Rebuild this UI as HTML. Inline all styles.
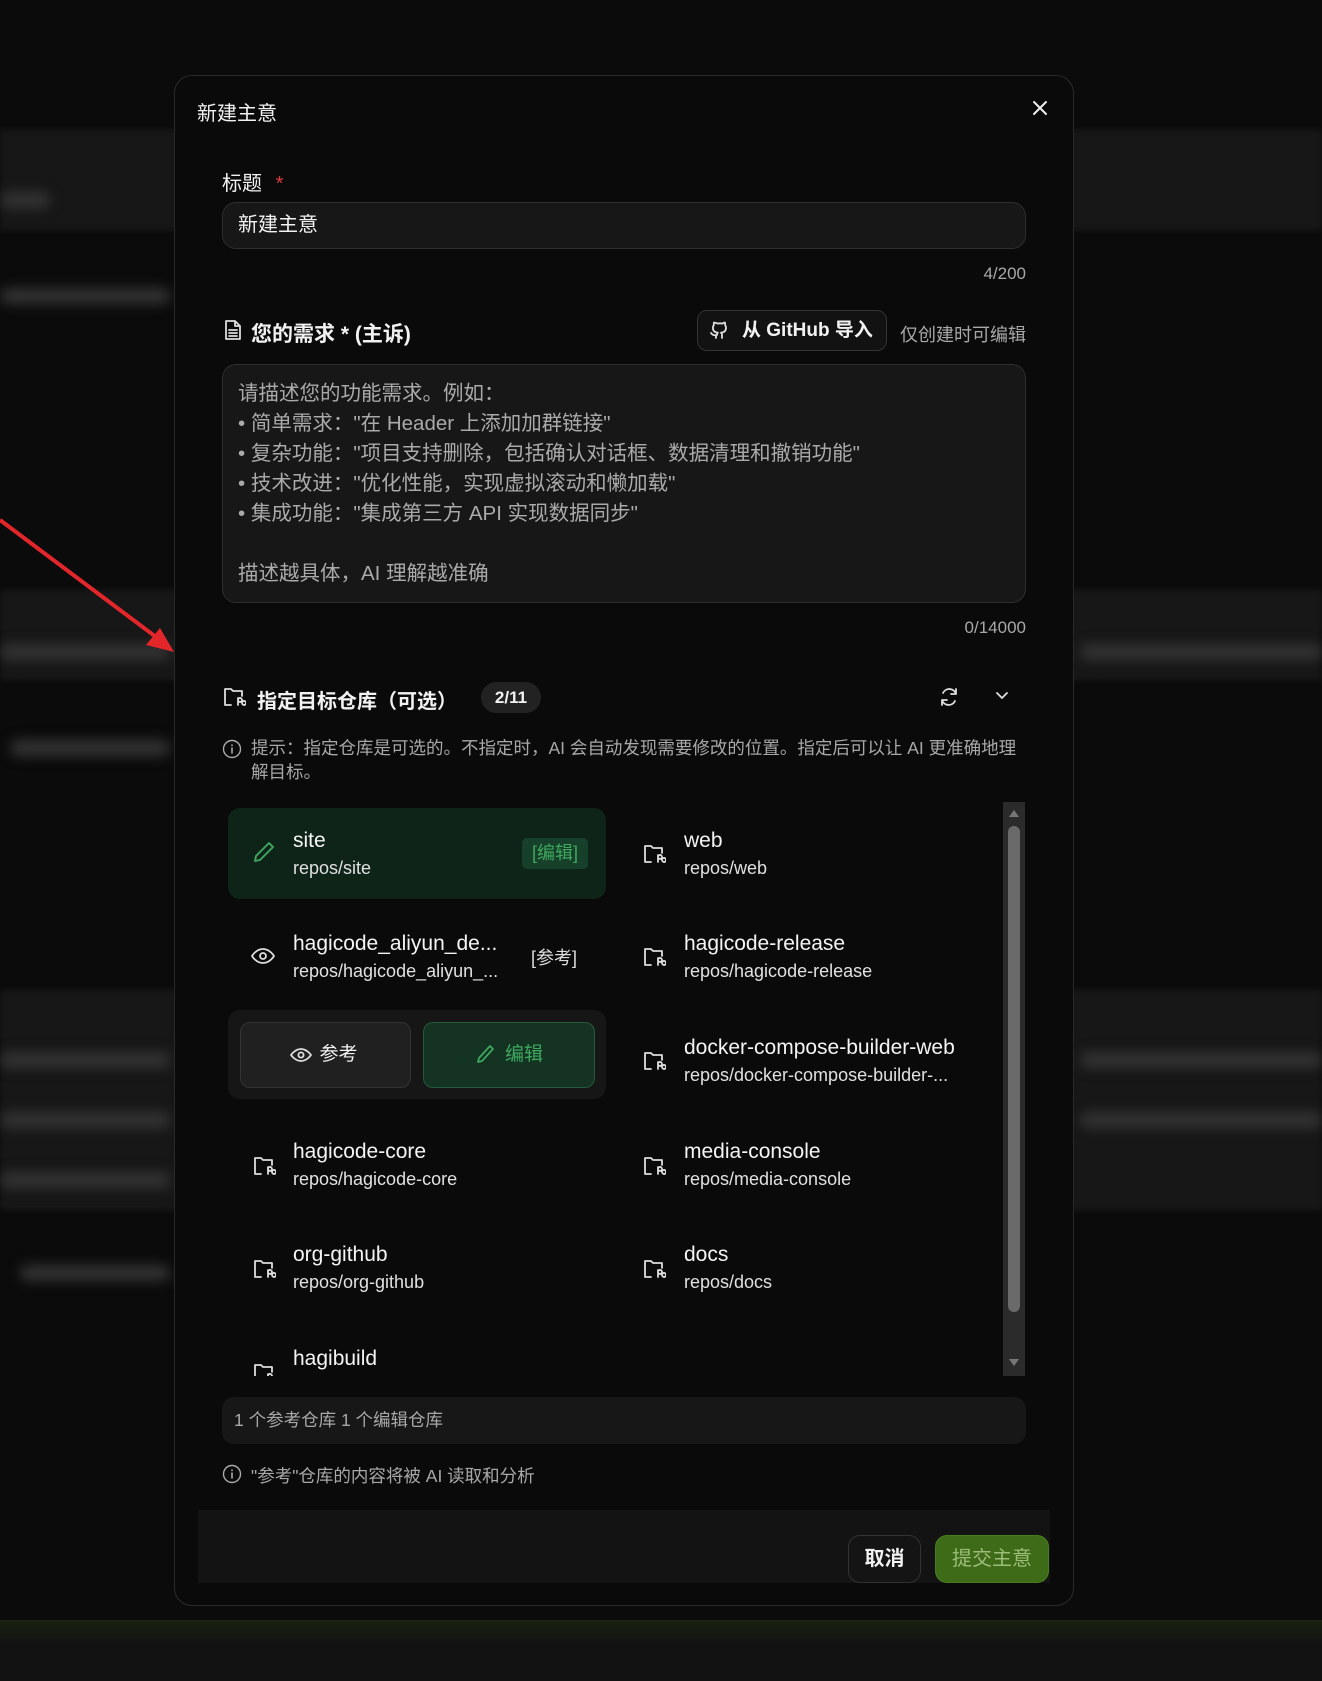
<!DOCTYPE html>
<html><head><meta charset="utf-8"><style>
*{box-sizing:border-box;margin:0;padding:0}
body{width:1322px;height:1681px;background:#0b0b0b;position:relative;overflow:hidden;font-family:"Liberation Sans","Noto Sans CJK SC",sans-serif;color:#f2f2f2}
.a{position:absolute}
.band{position:absolute;left:0;width:1322px;background:#171717;filter:blur(3px)}
.bt{position:absolute;height:16px;background:#333;filter:blur(6px);border-radius:8px}
.modal{position:absolute;left:174px;top:75px;width:900px;height:1531px;background:#0a0a0a;border:1px solid #2a2a2a;border-radius:18px}
.ico{stroke:#ddd;fill:none;stroke-width:1.8;stroke-linecap:round;stroke-linejoin:round}
.name{font-size:21px;color:#f4f4f4;line-height:24px}
.path{font-size:18px;color:#e0e0e0;line-height:24px}
.muted{color:#a8a8a8}
</style></head><body>
<div class="band" style="top:130px;height:100px"></div>
<div class="band" style="top:590px;height:90px"></div>
<div class="band" style="top:990px;height:220px"></div>
<div class="bt" style="left:0;top:192px;width:50px"></div>
<div class="bt" style="left:0;top:288px;width:170px"></div>
<div class="bt" style="left:0;top:644px;width:170px"></div>
<div class="bt" style="left:10px;top:740px;width:160px"></div>
<div class="bt" style="left:0;top:1052px;width:170px"></div>
<div class="bt" style="left:0;top:1112px;width:170px"></div>
<div class="bt" style="left:0;top:1172px;width:170px"></div>
<div class="bt" style="left:20px;top:1265px;width:150px"></div>
<div class="bt" style="left:1080px;top:644px;width:242px"></div>
<div class="bt" style="left:1080px;top:1052px;width:242px"></div>
<div class="bt" style="left:1080px;top:1112px;width:242px"></div>
<div class="a" style="left:0;top:1620px;width:1322px;height:61px;background:linear-gradient(#1a2210,#121212 40%)"></div>
<svg class="a" style="left:0;top:0" width="200" height="700"><line x1="0" y1="520" x2="160" y2="640" stroke="#e3262a" stroke-width="4"/><polygon points="174,652 146,645 160,628" fill="#e3262a"/></svg>

<div class="modal"></div>
<div class="a" style="left:197px;top:97px;font-size:20px">新建主意</div>
<svg class="a" style="left:1031px;top:99px" width="18" height="18"><path d="M3 3L15 15M15 3L3 15" stroke="#eee" stroke-width="2" stroke-linecap="round"/></svg>

<div class="a" style="left:222px;top:167px;font-size:20px">标题 <span style="color:#e03a3a;margin-left:8px">*</span></div>
<div class="a" style="left:222px;top:202px;width:804px;height:47px;background:#171717;border:1px solid #2e2e2e;border-radius:14px;padding:0 15px;font-size:20px;line-height:45px">新建主意</div>
<div class="a muted" style="left:900px;width:126px;text-align:right;top:264px;font-size:17px">4/200</div>

<svg class="a" style="left:223px;top:319px" width="20" height="22"><path class="ico" d="M3 2h9l5 5v13H3z M12 2v5h5 M6 11h8M6 14h8M6 17h8"/></svg>
<div class="a" style="left:251px;top:318px;font-size:21px;font-weight:bold">您的需求 * (主诉)</div>
<div class="a" style="left:697px;top:310px;width:190px;height:41px;border:1px solid #333;border-radius:10px;background:#121212;font-size:19px;line-height:39px;padding-left:44px;font-weight:bold">从 GitHub 导入</div>
<svg class="a" style="left:709px;top:320px" width="20" height="20"><path class="ico" d="M7 18v-3c-3 1-4-1-5-2M13 18v-3c0-1-.5-2-1-2.3 3-.3 5-1.5 5-5 0-1-.4-2-1-2.7.2-.8.2-1.8-.1-2.5 0 0-1 0-2.7 1.1a9 9 0 0 0-4.4 0C5.9 2.5 5 2.5 5 2.5c-.3.7-.3 1.7-.1 2.5-.6.7-1 1.7-1 2.7 0 3.5 2 4.7 5 5-.5.3-.9 1.2-.9 2.3"/></svg>
<div class="a muted" style="left:899px;top:321px;font-size:18px;width:127px;text-align:right;white-space:nowrap">仅创建时可编辑</div>

<div class="a" style="left:222px;top:364px;width:804px;height:239px;background:#171717;border:1px solid #2e2e2e;border-radius:14px;padding:14px 15px;font-size:20.5px;line-height:30px;color:#aaa">请描述您的功能需求。例如：<br>• 简单需求："在 Header 上添加加群链接"<br>• 复杂功能："项目支持删除，包括确认对话框、数据清理和撤销功能"<br>• 技术改进："优化性能，实现虚拟滚动和懒加载"<br>• 集成功能："集成第三方 API 实现数据同步"<br><br>描述越具体，AI 理解越准确</div>
<div class="a muted" style="left:900px;width:126px;text-align:right;top:618px;font-size:17px">0/14000</div>

<svg class="a" style="left:222px;top:686px" width="24" height="22"><path class="ico" d="M9 19H3V3h6l2 2h9v5 M16 12v7 M16 14a2 2 0 1 0 0-.1 M20 17a2 2 0 1 0 0-.1"/></svg>
<div class="a" style="left:257px;top:685px;font-size:20px;font-weight:bold">指定目标仓库（可选）</div>
<div class="a" style="left:481px;top:682px;width:60px;height:31px;border-radius:16px;background:#222;font-size:17px;line-height:31px;text-align:center;font-weight:bold">2/11</div>
<svg class="a" style="left:938px;top:686px" width="22" height="22"><path class="ico" d="M18 8a7 7 0 0 0-13-1M4 14a7 7 0 0 0 13 1 M18 3v5h-5 M4 19v-5h5"/></svg>
<svg class="a" style="left:994px;top:689px" width="16" height="14"><path class="ico" d="M3 4l5 5 5-5"/></svg>

<svg class="a" style="left:222px;top:739px" width="20" height="20"><circle cx="10" cy="10" r="8.5" class="ico" style="stroke:#aaa;stroke-width:1.4"/><path d="M10 9v5M10 6v.5" stroke="#aaa" stroke-width="1.6" stroke-linecap="round"/></svg>
<div class="a muted" style="left:251px;top:736px;width:780px;font-size:17.5px;line-height:24px">提示：指定仓库是可选的。不指定时，AI 会自动发现需要修改的位置。指定后可以让 AI 更准确地理解目标。</div>

<div class="a" style="left:1003px;top:802px;width:22px;height:574px;background:#2b2b2b"></div>
<div class="a" style="left:1008px;top:826px;width:12px;height:486px;background:#6a6a6a;border-radius:6px"></div>
<svg class="a" style="left:1008px;top:808px" width="12" height="10"><path d="M1 9L6 2 11 9z" fill="#777"/></svg>
<svg class="a" style="left:1008px;top:1358px" width="12" height="10"><path d="M1 1L6 8 11 1z" fill="#777"/></svg>

<div class="a" style="left:228px;top:808px;width:378px;height:91px;background:#0f2418;border-radius:12px"></div>
<svg class="a" style="left:252px;top:840px" width="24" height="24"><path d="M17 3l4 4L8 20l-5 1 1-5z" fill="none" stroke="#3ea95f" stroke-width="1.9" stroke-linejoin="round"/></svg>
<div class="a name" style="left:293px;top:829px">site</div>
<div class="a path" style="left:293px;top:856px">repos/site</div>
<div class="a" style="left:522px;top:838px;width:66px;height:31px;background:#17402a;border-radius:5px;color:#3ea95f;font-size:18px;line-height:31px;text-align:center">[编辑]</div>

<svg class="a" style="left:251px;top:945px" width="24" height="22"><path class="ico" d="M1 11s4-7 11-7 11 7 11 7-4 7-11 7S1 11 1 11z"/><circle cx="12" cy="11" r="3" class="ico"/></svg>
<div class="a name" style="left:293px;top:932px">hagicode_aliyun_de...</div>
<div class="a path" style="left:293px;top:959px">repos/hagicode_aliyun_...</div>
<div class="a" style="left:531px;top:944px;font-size:18px;color:#ddd">[参考]</div>

<div class="a" style="left:228px;top:1010px;width:378px;height:89px;background:#161616;border-radius:12px"></div>
<div class="a" style="left:240px;top:1022px;width:171px;height:66px;background:#202020;border:1px solid #333;border-radius:10px;font-size:19px;line-height:64px;text-align:center;padding-left:26px">参考</div>
<svg class="a" style="left:290px;top:1045px" width="22" height="20"><path class="ico" d="M1 10s4-6 10-6 10 6 10 6-4 6-10 6S1 10 1 10z"/><circle cx="11" cy="10" r="2.6" class="ico"/></svg>
<div class="a" style="left:423px;top:1022px;width:172px;height:66px;background:#143322;border:1px solid #245a3a;border-radius:10px;font-size:19px;line-height:64px;text-align:center;padding-left:30px;color:#3ea95f">编辑</div>
<svg class="a" style="left:474px;top:1043px" width="22" height="22"><path d="M16 3l3 3L8 18l-4 1 1-4z" fill="none" stroke="#3ea95f" stroke-width="1.7" stroke-linejoin="round"/></svg>

<svg class="a" style="left:252px;top:1155px" width="24" height="22"><path class="ico" d="M9 19H3V3h6l2 2h9v5 M16 12v7 M16 14a2 2 0 1 0 0-.1 M20 17a2 2 0 1 0 0-.1"/></svg>
<div class="a name" style="left:293px;top:1140px">hagicode-core</div>
<div class="a path" style="left:293px;top:1167px">repos/hagicode-core</div>
<svg class="a" style="left:252px;top:1258px" width="24" height="22"><path class="ico" d="M9 19H3V3h6l2 2h9v5 M16 12v7 M16 14a2 2 0 1 0 0-.1 M20 17a2 2 0 1 0 0-.1"/></svg>
<div class="a name" style="left:293px;top:1243px">org-github</div>
<div class="a path" style="left:293px;top:1270px">repos/org-github</div>
<div class="a" style="left:228px;top:1360px;width:100px;height:16px;overflow:hidden"><svg style="position:absolute;left:24px;top:2px" width="24" height="22"><path class="ico" d="M9 19H3V3h6l2 2h9v5 M16 12v7 M16 14a2 2 0 1 0 0-.1 M20 17a2 2 0 1 0 0-.1"/></svg></div>
<div class="a name" style="left:293px;top:1347px">hagibuild</div>

<svg class="a" style="left:642px;top:843px" width="24" height="22"><path class="ico" d="M9 19H3V3h6l2 2h9v5 M16 12v7 M16 14a2 2 0 1 0 0-.1 M20 17a2 2 0 1 0 0-.1"/></svg>
<div class="a name" style="left:684px;top:829px">web</div>
<div class="a path" style="left:684px;top:856px">repos/web</div>
<svg class="a" style="left:642px;top:946px" width="24" height="22"><path class="ico" d="M9 19H3V3h6l2 2h9v5 M16 12v7 M16 14a2 2 0 1 0 0-.1 M20 17a2 2 0 1 0 0-.1"/></svg>
<div class="a name" style="left:684px;top:932px">hagicode-release</div>
<div class="a path" style="left:684px;top:959px">repos/hagicode-release</div>
<svg class="a" style="left:642px;top:1050px" width="24" height="22"><path class="ico" d="M9 19H3V3h6l2 2h9v5 M16 12v7 M16 14a2 2 0 1 0 0-.1 M20 17a2 2 0 1 0 0-.1"/></svg>
<div class="a name" style="left:684px;top:1036px">docker-compose-builder-web</div>
<div class="a path" style="left:684px;top:1063px">repos/docker-compose-builder-...</div>
<svg class="a" style="left:642px;top:1155px" width="24" height="22"><path class="ico" d="M9 19H3V3h6l2 2h9v5 M16 12v7 M16 14a2 2 0 1 0 0-.1 M20 17a2 2 0 1 0 0-.1"/></svg>
<div class="a name" style="left:684px;top:1140px">media-console</div>
<div class="a path" style="left:684px;top:1167px">repos/media-console</div>
<svg class="a" style="left:642px;top:1258px" width="24" height="22"><path class="ico" d="M9 19H3V3h6l2 2h9v5 M16 12v7 M16 14a2 2 0 1 0 0-.1 M20 17a2 2 0 1 0 0-.1"/></svg>
<div class="a name" style="left:684px;top:1243px">docs</div>
<div class="a path" style="left:684px;top:1270px">repos/docs</div>

<div class="a muted" style="left:222px;top:1397px;width:804px;height:47px;background:#171717;border-radius:12px;padding-left:12px;font-size:17.5px;line-height:47px">1 个参考仓库 1 个编辑仓库</div>
<svg class="a" style="left:222px;top:1464px" width="20" height="20"><circle cx="10" cy="10" r="8.5" class="ico" style="stroke:#aaa;stroke-width:1.4"/><path d="M10 9v5M10 6v.5" stroke="#aaa" stroke-width="1.6" stroke-linecap="round"/></svg>
<div class="a muted" style="left:251px;top:1463px;font-size:17.5px">"参考"仓库的内容将被 AI 读取和分析</div>

<div class="a" style="left:198px;top:1510px;width:852px;height:73px;background:#131313"></div>
<div class="a" style="left:848px;top:1535px;width:73px;height:48px;background:#141414;border:1px solid #333;border-radius:12px;font-size:20px;line-height:46px;text-align:center;font-weight:bold">取消</div>
<div class="a" style="left:935px;top:1535px;width:114px;height:48px;background:#3d6b17;border:1px solid #4b7d20;border-radius:12px;font-size:20px;line-height:46px;text-align:center;color:#9cbd7a">提交主意</div>
</body></html>
